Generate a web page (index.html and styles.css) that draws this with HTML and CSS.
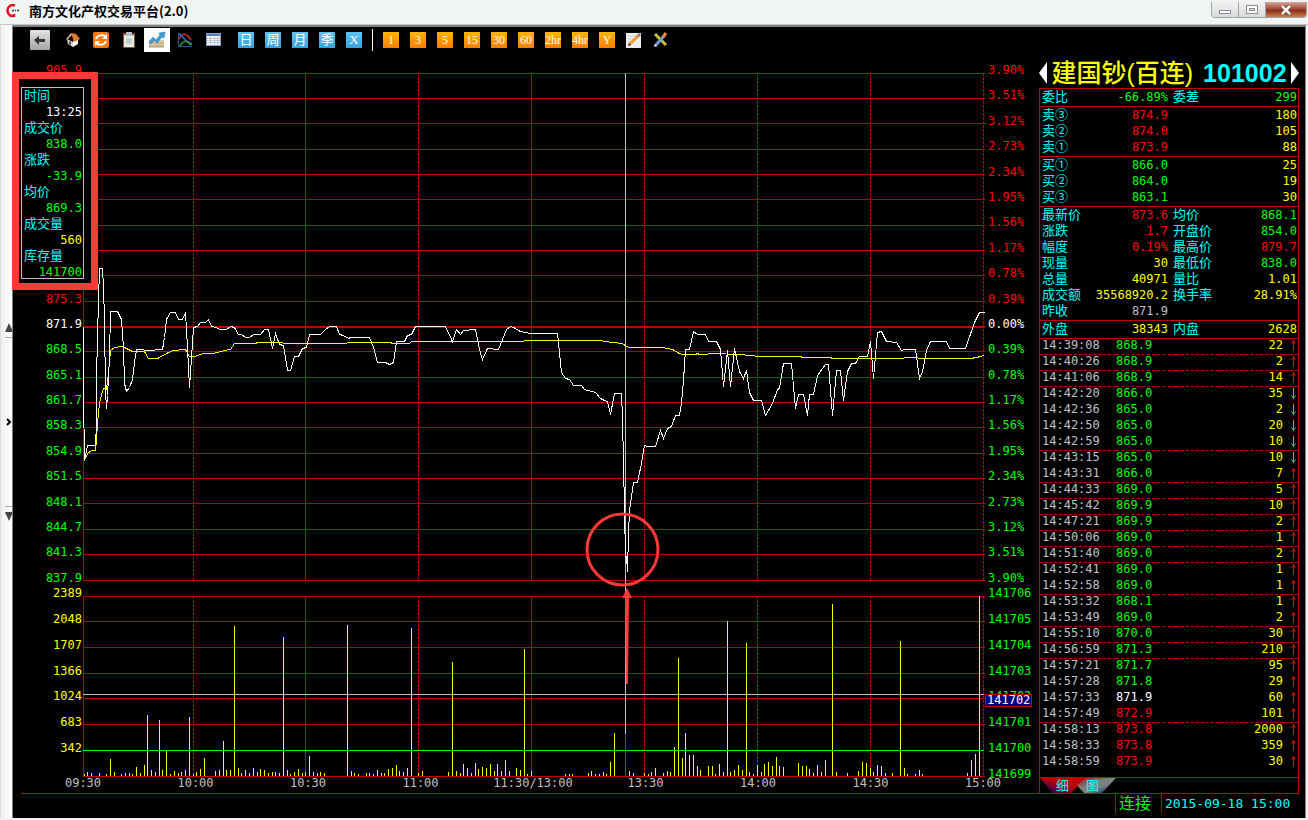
FILE: index.html
```html
<!DOCTYPE html>
<html lang="zh-CN">
<head>
    <meta charset="UTF-8">
    <meta name="viewport" content="width=device-width, initial-scale=1.0">
    <title>南方文化产权交易平台(2.0)</title>
    <link rel="stylesheet" href="styles.css">
</head>
<body>
    <header class="titlebar">
        <svg class="logo" width="13" height="14" viewBox="0 0 13 14">
            <path d="M9 1.5C5 0 1 3 1.500 7s4 6 7 4.500M8 10v3" fill="none" stroke="#e01020" stroke-width="2.500"/>
            <path d="M6 6.500h2M9 6.500h1M11 6.500h2" stroke="#333" stroke-width="1.500"/>
        </svg>
        <h1>南方文化产权交易平台(2.0)</h1>
        <div class="win-buttons">
            <button class="win-min" aria-label="最小化"><svg width="12" height="10" viewBox="0 0 12 10"><rect x="0.500" y="5.500" width="11" height="3" fill="#fff" stroke="#8a8d92"/></svg></button>
            <button class="win-max" aria-label="最大化"><svg width="12" height="10" viewBox="0 0 12 10"><rect x="0.500" y="0.500" width="11" height="8" fill="#fff" stroke="#8a8d92"/><rect x="3.500" y="3.500" width="5" height="2" fill="#ddd" stroke="#8a8d92"/></svg></button>
            <button class="win-close" aria-label="关闭"><svg width="12" height="10" viewBox="0 0 12 10"><path d="M2 1l8 8M10 1l-8 8" stroke="#5a3030" stroke-width="4"/><path d="M2 1l8 8M10 1l-8 8" stroke="#fff" stroke-width="2.500"/></svg></button>
        </div>
    </header>

    <div class="frame">
        <aside class="gutter">
            <button class="gutter-up" aria-label="上"><svg width="8" height="10" viewBox="0 0 8 10"><path d="M4 0l4 9H0z" fill="#444"/></svg></button>
            <button class="gutter-open" aria-label="展开"><svg width="6" height="8" viewBox="0 0 6 8"><path d="M1 1l3 3-3 3" fill="none" stroke="#000" stroke-width="2"/></svg></button>
            <button class="gutter-down" aria-label="下"><svg width="8" height="10" viewBox="0 0 8 10"><path d="M4 10L0 1h8z" fill="#444"/></svg></button>
        </aside>

        <main class="client">
            <div class="workspace">
                <section class="left">
                    <nav class="toolbar">
                        <button class="tool tool-back" aria-label="返回"><svg width="20" height="20" viewBox="0 0 20 20"><defs><linearGradient id="gBack" x2="0" y2="1"><stop offset="0" stop-color="#e4e4e4"/><stop offset="1" stop-color="#a4a4a4"/></linearGradient></defs><rect width="20" height="20" rx="1" fill="url(#gBack)"/><path d="M4 10l5-4v3h6v3H9v3z" fill="#333"/></svg></button>
                        <button class="tool" aria-label="主页"><svg width="16" height="16" viewBox="0 0 16 16"><path d="M2 7l6 3v5l-5-3z" fill="#d8d8d8"/><path d="M8 9l5-3v6l-5 3z" fill="#f6f6f6"/><path d="M6 1l5 1 4 5-6 3z" fill="#e77a2c"/><path d="M6 1L1 7l1 1 5-5z" fill="#b9b2aa"/><path d="M4 9l2 1v3l-2-1z" fill="#6b4a3c"/></svg></button>
                        <button class="tool" aria-label="刷新"><svg width="16" height="16" viewBox="0 0 16 16"><rect width="16" height="16" rx="2" fill="#ff7a10"/><path d="M3 7c1-4 7-5 10-2M13 9c-1 4-7 5-10 2" fill="none" stroke="#fff" stroke-width="2"/><path d="M14 2v5H9zM2 14V9h5z" fill="#fff"/></svg></button>
                        <button class="tool" aria-label="剪贴板"><svg width="14" height="16" viewBox="0 0 14 16"><rect x="1" y="1" width="12" height="15" fill="#8a4b22"/><rect x="2" y="3" width="10" height="12" fill="#e4efec"/><rect x="4" y="0" width="6" height="4" fill="#b8bec2"/><path d="M4 7h6M4 9h6M4 11h6" stroke="#9ab4b0"/></svg></button>
                        <button class="tool tool-active" aria-label="分时"><svg width="18" height="18" viewBox="0 0 18 18"><path d="M1 9h15v8H1z" fill="#dcc9a8"/><path d="M1 12h15M1 15h15" stroke="#b49b72"/><path d="M1 11l4-5 3 3 4-5-1-2 6-1-1 6-2-1-5 6-3-3-3 4z" fill="#3f9ad8" stroke="#2770a8" stroke-width="0.500"/></svg></button>
                        <button class="tool" aria-label="指标"><svg width="16" height="16" viewBox="0 0 16 16"><path d="M1.500 1v13.500H15" fill="none" stroke="#27608e"/><path d="M2 7c3-6 7-7 12 1" fill="none" stroke="#e02828" stroke-width="1.500"/><path d="M2 2c3 1 5 5 7 7 2 1 4 2 6 3" fill="none" stroke="#2b6fd0" stroke-width="1.500"/><path d="M3 14c3-6 7-6 11-1" fill="none" stroke="#30a840" stroke-width="1.500"/></svg></button>
                        <button class="tool" aria-label="列表"><svg width="15" height="14" viewBox="0 0 15 14"><rect x="0.500" y="0.500" width="14" height="12" fill="#f4f7fb" stroke="#8aa0c8"/><rect x="1" y="1" width="13" height="2" fill="#5a80c4"/><path d="M1 5.500h13M1 7.500h13M1 9.500h13M4.500 4v8M8.500 4v8M11.500 4v8" stroke="#b4bdcc" stroke-width="0.800"/></svg></button>
                        <div class="periods">
                            <button class="day">日</button>
                            <button class="day">周</button>
                            <button class="day">月</button>
                            <button class="day">季</button>
                            <button class="day">X</button>
                            <span class="sep"></span>
                            <button class="min">1</button>
                            <button class="min">3</button>
                            <button class="min">5</button>
                            <button class="min">15</button>
                            <button class="min">30</button>
                            <button class="min">60</button>
                            <button class="min">2hr</button>
                            <button class="min">4hr</button>
                            <button class="min">Y</button>
                            <button class="pic" aria-label="编辑"><svg width="16" height="16" viewBox="0 0 16 16"><rect y="1" width="15" height="15" fill="#ececec"/><path d="M2 4h9M2 7h7M2 10h6" stroke="#d0d0d0"/><path d="M3 13L13 3" stroke="#e8a030" stroke-width="3"/><path d="M12 4l2-2" stroke="#a070b0" stroke-width="3"/><path d="M2 14l1-3 2 2z" fill="#333"/></svg></button>
                            <button class="pic" aria-label="工具"><svg width="15" height="16" viewBox="0 0 15 16"><path d="M2 2l11 11" stroke="#c8c030" stroke-width="3"/><path d="M2 14L11 4" stroke="#6f9fd8" stroke-width="3"/><path d="M10 5l3-4" stroke="#f09030" stroke-width="3"/><path d="M1 15l1-3 2 2z" fill="#ddd"/></svg></button>
                        </div>
                    </nav>

                    <div class="chart">
                        <div class="axis axis-left">
                            <ul class="scale price-scale" id="priceScale"></ul>
                            <ul class="scale volume-scale" id="volumeScale"></ul>
                        </div>
                        <svg class="plot" id="plot" viewBox="83 73 902 704" preserveAspectRatio="none"></svg>
                        <div class="axis axis-right">
                            <ul class="scale price-scale" id="percentScale"></ul>
                            <ul class="scale volume-scale" id="stockScale"></ul>
                        </div>

                        <div class="marker">
                            <dl class="info">
                                <dt>时间</dt><dd class="white">13:25</dd>
                                <dt>成交价</dt><dd class="green">838.0</dd>
                                <dt>涨跌</dt><dd class="green">-33.9</dd>
                                <dt>均价</dt><dd class="green">869.3</dd>
                                <dt>成交量</dt><dd class="yellow">560</dd>
                                <dt>库存量</dt><dd class="green">141700</dd>
                            </dl>
                        </div>
                    </div>
                    <div class="times">
                        <span>09:30</span><span>10:00</span><span>10:30</span><span>11:00</span><span>11:30/13:00</span><span>13:30</span><span>14:00</span><span>14:30</span><span>15:00</span>
                    </div>
                </section>

                <section class="panel">
                    <div class="stock">
                        <button aria-label="上一个"><svg width="8" height="22" viewBox="0 0 8 22"><path d="M8 0v22L0 11z" fill="#fff"/></svg></button>
                        <h2><span class="yellow">建国钞(百连)</span> <span class="cyan">101002</span></h2>
                        <button aria-label="下一个"><svg width="8" height="22" viewBox="0 0 8 22"><path d="M0 0v22l8-11z" fill="#fff"/></svg></button>
                    </div>
                    <div class="quotes">
                        <table class="quote">
                            <tr><th>委比</th><td class="green">-66.89%</td><th>委差</th><td class="green">299</td></tr>
                        </table>
                        <table class="quote">
                            <tr><th>卖③</th><td class="red">874.9</td><th></th><td class="yellow">180</td></tr>
                            <tr><th>卖②</th><td class="red">874.0</td><th></th><td class="yellow">105</td></tr>
                            <tr><th>卖①</th><td class="red">873.9</td><th></th><td class="yellow">88</td></tr>
                        </table>
                        <table class="quote">
                            <tr><th>买①</th><td class="green">866.0</td><th></th><td class="yellow">25</td></tr>
                            <tr><th>买②</th><td class="green">864.0</td><th></th><td class="yellow">19</td></tr>
                            <tr><th>买③</th><td class="green">863.1</td><th></th><td class="yellow">30</td></tr>
                        </table>
                        <table class="quote">
                            <tr><th>最新价</th><td class="red">873.6</td><th>均价</th><td class="green">868.1</td></tr>
                            <tr><th>涨跌</th><td class="red">1.7</td><th>开盘价</th><td class="green">854.0</td></tr>
                            <tr><th>幅度</th><td class="red">0.19%</td><th>最高价</th><td class="red">879.7</td></tr>
                            <tr><th>现量</th><td class="yellow">30</td><th>最低价</th><td class="green">838.0</td></tr>
                            <tr><th>总量</th><td class="yellow">40971</td><th>量比</th><td class="yellow">1.01</td></tr>
                            <tr><th>成交额</th><td class="yellow">35568920.2</td><th>换手率</th><td class="yellow">28.91%</td></tr>
                            <tr><th>昨收</th><td class="grey">871.9</td><th></th><td></td></tr>
                        </table>
                        <table class="quote last">
                            <tr><th>外盘</th><td class="yellow">38343</td><th>内盘</th><td class="yellow">2628</td></tr>
                        </table>
                        <table class="trades"><tbody id="trades"></tbody></table>
                        <div class="tabs">
                            <button class="tab tab-detail">细</button>
                            <button class="tab tab-chart">图</button>
                        </div>
                    </div>
                </section>
            </div>

            <footer class="status">
                <span class="link green">连接</span>
                <time class="cyan">2015-09-18 15:00</time>
            </footer>
        </main>
    </div>
    <script src="chart.js"></script>
</body>
</html>
```
FILE: styles.css
```css
* {
    box-sizing: border-box;
}
body {
    display: flex;
    flex-direction: column;
    min-height: 100vh;
    margin: 0;
    background: #f0f4f5;
    color: #c0c0c0;
    font-family: "DejaVu Sans Mono", "Noto Sans CJK SC", monospace;
    font-size: 12px;
    line-height: 16px;
}
button {
    padding: 0;
    border: 0;
    background: none;
    color: inherit;
    font: inherit;
    cursor: pointer;
}
svg {
    display: block;
}
ul, dl, dd, h1, h2 {
    margin: 0;
    padding: 0;
    list-style: none;
}
.red { color: #ff0000; }
.green { color: #00ff00; }
.yellow { color: #ffff00; }
.cyan { color: #00ffff; }
.white { color: #ffffff; }
.grey { color: #c0c0c0; }

/* title bar */
.titlebar {
    display: flex;
    align-items: flex-start;
    height: 24px;
    padding: 2px 1px 0 6px;
}
.logo {
    margin-top: 2px;
}
.titlebar h1 {
    flex: 1;
    padding-left: 10px;
    color: #000;
    font: bold 13px/17px "Noto Sans CJK SC", sans-serif;
}
.win-buttons {
    display: flex;
    height: 16px;
    border: 1px solid #a0a4a8;
    border-top: 0;
    border-radius: 0 0 4px 4px;
    overflow: hidden;
}
.win-buttons button {
    display: flex;
    align-items: center;
    justify-content: center;
    width: 27px;
    border-right: 1px solid #a0a4a8;
    background: linear-gradient(#f2f2f2, #d8dadc);
}
.win-buttons .win-close {
    width: 40px;
    border: 0;
    background: linear-gradient(#d8a898, #984030 50%, #8a2c18 55%, #c88050);
}

/* window frame */
.frame {
    display: flex;
    flex: 1;
    padding: 0 2px 2px 0;
    border-top: 1px solid #c8c8c8;
}
.gutter {
    display: flex;
    flex-direction: column;
    align-items: center;
    justify-content: center;
    gap: 80px;
    width: 12px;
    padding-left: 4px;
    border-left: 1px solid #dcdcdc;
    background: linear-gradient(to right, #f0f0f0, #ffffff);
}
.gutter-up {
    padding-bottom: 4px;
    border-bottom: 1px solid #aaa;
}
.gutter-down {
    padding-top: 4px;
    border-top: 1px solid #aaa;
}
.client {
    display: flex;
    flex: 1;
    flex-direction: column;
    min-width: 0;
    border: solid #808080;
    border-width: 2px 1px 0 1px;
    background: #000;
}
.workspace {
    display: flex;
    flex: 1;
}
.left {
    display: flex;
    flex: 1;
    flex-direction: column;
    min-width: 0;
}

/* toolbar */
.toolbar {
    display: flex;
    gap: 2px;
    height: 27px;
    padding: 1px 0 2px 14px;
}
.tool {
    display: flex;
    align-items: center;
    justify-content: center;
    width: 26px;
    height: 24px;
}
.tool-back {
    margin-right: 5px;
}
.tool-active {
    background: #fff;
}
.periods {
    display: flex;
    align-items: center;
    gap: 11px;
    padding-left: 10px;
}
.day, .min, .pic {
    width: 16px;
    height: 16px;
}
.day, .min {
    display: flex;
    align-items: center;
    justify-content: center;
    color: #fff;
}
.day {
    background: linear-gradient(#5cc4f4, #38a0dc);
    font: 13px/16px "Liberation Serif", "Noto Sans CJK SC", serif;
}
.min {
    background: linear-gradient(#ffb400, #ff7c00);
    font: 12px/16px "Liberation Serif", serif;
}
.sep {
    width: 1px;
    height: 22px;
    margin: 0 -1px;
    background: #fff;
}

/* chart */
.chart {
    position: relative;
    display: flex;
    flex: 1;
    padding-top: 19px;
}
.plot {
    flex: 1;
    min-width: 0;
    height: auto;
    align-self: stretch;
    shape-rendering: crispEdges;
}
.axis {
    display: flex;
    flex-direction: column;
    gap: 15px;
    min-height: 704px;
}
.axis-left {
    width: 70px;
    text-align: right;
}
.axis-right {
    width: 54px;
    padding-left: 3px;
}
.scale {
    display: flex;
    flex-direction: column;
    justify-content: space-between;
    margin: -11px 1px -5px 0;
}
.price-scale {
    flex: 524;
}
.volume-scale {
    flex: 197;
}
.scale li {
    height: 16px;
}
.scale .current {
    position: relative;
}
.current b {
    position: absolute;
    top: 6px;
    left: -3px;
    padding: 0 1px;
    border: 1px solid #c00000;
    background: #000080;
    color: #fff;
    font-weight: normal;
    line-height: 11px;
}
.times {
    display: flex;
    justify-content: space-between;
    height: 16px;
    padding: 0 56px 0 70px;
    line-height: 13px;
}
.times span {
    display: flex;
    justify-content: center;
    width: 0;
}
.grid {
    fill: none;
    stroke: #c00000;
}
.dashed {
    stroke-dasharray: 3 1;
}
.base {
    stroke-width: 2;
}
.level {
    stroke: #00ff00;
}
.price {
    fill: none;
    stroke: #ffffff;
}
.average {
    fill: none;
    stroke: #ffff00;
}
.bars {
    fill: none;
    stroke: #ffff00;
}
.cross {
    stroke: #c0c0c0;
}
.cross-bar {
    stroke: #4040c0;
}
.note {
    fill: none;
    stroke: #ff3838;
    stroke-width: 3;
    shape-rendering: auto;
}
.note-arrow {
    fill: #ff3838;
    shape-rendering: auto;
}

/* framed readout at the cursor, lies over the price scale */
.marker {
    position: absolute;
    top: 18px;
    left: -1px;
    width: 86px;
    padding: 8px 7px 4px 2px;
    border: 7px solid #ff3838;
    background: #000;
}
.info {
    width: 63px;
    height: 192px;
    padding: 0 1px 0 2px;
    border: 1px solid #c0c0c0;
    color: #00ffff;
}
.info dt {
    font-size: 13px;
}
.info dd {
    text-align: right;
}

/* right panel */
.panel {
    display: flex;
    flex-direction: column;
    width: 260px;
    margin-right: 6px;
}
.stock {
    display: flex;
    align-items: center;
    justify-content: space-between;
    height: 61px;
    padding-top: 30px;
}
.stock h2 {
    display: flex;
    gap: 10px;
    font: bold 25px/30px "Liberation Sans", "Noto Sans CJK SC", sans-serif;
    white-space: nowrap;
}
.stock .yellow {
    font-weight: 500;
}
.quotes {
    display: flex;
    flex: 1;
    flex-direction: column;
    border: solid #c00000;
    border-width: 0 1px;
}
table {
    width: 100%;
    border-spacing: 0;
    table-layout: fixed;
}
th, td {
    height: 16px;
    padding: 0;
    text-align: right;
    white-space: nowrap;
}
.quote {
    padding-bottom: 1px;
    border-top: 1px solid #c00000;
}
.quote th {
    width: 44px;
    padding-left: 2px;
    color: #00ffff;
    font-size: 13px;
    font-weight: normal;
    text-align: left;
}
.quote td:nth-child(2) {
    width: 84px;
}
.quote th:nth-child(3) {
    width: 50px;
    padding-left: 5px;
}
.quote td:last-child {
    padding-right: 1px;
}
.trades td {
    padding-bottom: 2px;
    border-top: 1px solid transparent;
    line-height: 13px;
}
.trades .minute td {
    border-top: 1px dashed #c00000;
}
.trades tr:first-child td {
    border-top: 1px solid #c00000;
}
.trades td:nth-child(1) {
    width: 76px;
    padding-left: 2px;
    text-align: left;
}
.trades td:nth-child(2) {
    width: 60px;
    text-align: left;
}
.trades td:nth-child(4) {
    width: 15px;
}
.trades svg {
    margin-left: 8px;
}
.tabs {
    display: flex;
    height: 16px;
    margin-top: auto;
    border-top: 1px solid #c00000;
}
.tab {
    height: 15px;
    color: #00ffff;
    font-size: 13px;
    line-height: 15px;
}
.tab-detail {
    width: 45px;
    background: linear-gradient(200deg, #c00000 45%, #000080);
    clip-path: polygon(0 0, 100% 0, 31px 100%, 13px 100%);
}
.tab-chart {
    width: 39px;
    margin-left: -8px;
    padding-right: 8px;
    background: linear-gradient(160deg, #c00000, #808080 40%, #808080 60%, #000080);
    clip-path: polygon(8px 0, 100% 0, 25px 100%, 7px 100%, 0 50%);
}

/* status bar */
.status {
    display: flex;
    justify-content: flex-end;
    height: 25px;
    margin: 0 6px 0 8px;
    border-top: 1px solid #c00000;
}
.status .link {
    height: 19px;
    padding: 0 10px 0 3px;
    border-left: 1px solid #c00000;
    font-size: 16px;
    line-height: 19px;
}
.status time {
    width: 138px;
    height: 19px;
    padding-left: 3px;
    border-left: 1px solid #c00000;
    font-size: 13px;
    line-height: 19px;
    white-space: nowrap;
}
```
FILE: chart.js
```js
var SVG_NS = 'http://www.w3.org/2000/svg';
var plot = document.getElementById('plot');

function draw(tag, cls, attrs) {
    var el = document.createElementNS(SVG_NS, tag);
    el.setAttribute('class', cls);
    for (var key in attrs) {
        el.setAttribute(key, attrs[key]);
    }
    plot.appendChild(el);
}

function line(cls, x1, y1, x2, y2) {
    draw('line', cls, { x1: x1, y1: y1, x2: x2, y2: y2 });
}

// horizontal grid
for (var i = 0; i <= 20; i++) {
    var y = Math.floor(73 + i * 25.35) + 0.5;
    if (i === 10) {
        line('grid base', 83, 327, 985, 327);
    } else {
        line('grid', 83, y, 985, y);
    }
}
[596, 621, 647, 673, 698, 724, 776].forEach(function (y) {
    line('grid', 83, y + 0.5, 985, y + 0.5);
});

// vertical grid, solid every second half hour in the morning
[[83, ''], [193, 'dashed'], [305, ''], [418, 'dashed'], [531, ''], [644, 'dashed'],
 [757, 'dashed'], [870, 'dashed'], [983, 'dashed']].forEach(function (v) {
    line('grid ' + v[1], v[0] + 0.5, 73, v[0] + 0.5, 580);
    line('grid ' + v[1], v[0] + 0.5, 596, v[0] + 0.5, 776);
});

// volume: x, height
var bars = [84,2,87,4,91,3,99,3,106,2,110,17,114,4,121,2,125,3,129,3,132,2,136,9,140,3,144,11,147,61,
    151,6,155,4,159,56,162,6,166,25,170,2,174,5,178,3,181,4,185,6,189,59,193,2,196,4,200,7,204,18,
    215,5,219,6,223,35,226,6,230,6,234,150,238,8,241,3,245,6,249,3,253,8,257,4,260,7,264,6,268,3,
    272,4,275,4,279,3,283,139,287,6,290,2,294,4,298,7,302,3,305,4,309,20,313,4,317,3,320,4,324,3,
    347,151,351,5,354,3,358,2,366,3,369,3,373,2,377,6,381,3,384,3,388,7,392,8,396,11,399,5,403,4,
    407,8,411,148,418,3,422,5,448,4,452,114,456,5,460,3,463,12,467,8,471,3,475,13,478,7,482,9,
    486,8,490,12,494,5,497,12,501,5,505,16,509,5,516,8,520,6,524,127,527,2,531,5,565,2,569,2,
    572,2,588,3,591,5,595,2,599,2,603,4,606,2,610,14,614,43,629,5,633,3,644,3,648,2,651,4,655,8,
    663,3,667,5,670,4,674,29,678,118,682,18,685,43,689,21,693,21,697,10,700,6,708,10,712,10,
    715,2,719,12,723,4,727,155,730,4,734,6,738,11,742,6,746,133,749,4,753,2,757,11,761,4,764,12,
    768,14,772,10,776,19,779,10,783,9,798,13,802,10,806,10,809,7,813,3,817,11,821,4,825,16,
    832,172,836,4,847,3,858,5,862,14,866,13,870,8,873,4,877,11,881,10,885,3,892,3,900,135,904,8,
    907,2,915,2,919,6,922,2,967,3,971,16,975,22,979,180];
var d = '';
for (var b = 0; b < bars.length; b += 2) {
    d += 'M' + (bars[b] + 0.5) + ' 776v-' + bars[b + 1];
}
draw('path', 'bars', { d: d });
line('level', 83, 750.5, 984, 750.5);

// crosshair
line('cross', 625.5, 73, 625.5, 734);
line('cross', 83, 694.5, 984, 694.5);
line('cross-bar', 625.5, 734, 625.5, 776);

var average = '84,460 87,453 91,450 95,450 96,440 97,422 99,403 101,394 103,388 106,389 108,372 110,350 ' +
    '114,347 122,346 126,348 132,351 144,351 148,358 157,358 168,352 173,350 185,349 189,356 194,356 ' +
    '203,353 213,353 224,350 230,349 234,343 255,343 257,342 282,342 283,343 346,343 347,342 390,342 ' +
    '392,343 409,343 411,341 523,341 524,340 602,340 603,341 613,342 622,343 626,346 629,347 662,347 ' +
    '672,349 679,353 682,354 695,354 697,353 699,354 707,354 708,353 743,354 746,355 762,356 800,356 ' +
    '802,357 830,357 832,358 903,358 904,357 917,357 918,358 969,358 977,357 979,356 984,355';

var price = '83,326 83,393 84,460 87,445 95,445 96,423 96,378 97,337 98,300 99,268 102,268 103,286 104,320 ' +
    '105,390 106,408 107,395 109,357 110,311 117,311 121,319 123,347 124,383 126,391 129,387 132,379 ' +
    '134,362 136,349 143,349 144,350 154,350 155,349 162,349 164,337 166,319 170,312 175,312 178,319 ' +
    '182,319 185,312 187,347 189,387 191,357 193,327 197,326 200,322 205,322 208,319 211,326 216,327 ' +
    '219,329 226,329 230,326 234,327 238,334 241,334 245,337 249,337 253,334 260,334 264,329 268,329 ' +
    '272,348 275,333 279,344 283,345 285,357 287,370 290,370 294,356 298,356 302,348 306,347 309,334 ' +
    '320,334 325,329 329,326 336,326 339,334 343,335 348,338 350,337 369,337 373,347 377,362 385,362 ' +
    '389,364 393,362 396,341 404,341 407,335 411,334 415,326 445,326 452,341 456,329 460,334 463,330 ' +
    '475,329 479,349 482,359 487,348 498,349 502,339 506,329 510,326 513,327 520,331 530,333 557,333 ' +
    '559,352 561,372 565,378 569,379 573,385 581,385 584,389 595,392 600,398 604,400 607,401 610,414 ' +
    '614,393 621,393 622,417 623,463 624,510 625,556 626,556 627,571 628,533 629,510 633,482 637,482 ' +
    '641,463 644,445 647,446 655,446 660,430 663,438 667,428 671,426 675,415 679,415 681,402 683,380 ' +
    '685,349 689,349 693,331 697,334 705,334 708,341 716,341 720,349 723,386 727,350 730,386 734,348 ' +
    '739,371 743,378 746,370 749,392 753,400 761,400 765,415 772,403 777,389 779,388 783,363 791,363 ' +
    '795,408 798,394 803,394 807,415 809,394 813,394 817,375 825,364 828,364 832,415 836,370 840,370 ' +
    '843,400 847,371 851,363 855,363 859,356 867,356 870,341 873,378 877,332 881,331 886,341 896,342 ' +
    '901,350 904,349 915,349 919,378 922,371 926,350 930,341 946,341 949,348 965,348 974,322 979,312 984,312';

draw('polyline', 'average', { points: average, transform: 'translate(0.5 0.5)' });
draw('polyline', 'price', { points: price, transform: 'translate(0.5 0.5)' });

// low point mark
draw('circle', 'note', { cx: 622.5, cy: 549.5, r: 35.5 });
draw('path', 'note-arrow', { d: 'M627 588l5 10h-3l-1 86h-2l-1-86h-3z' });

// scales
function scale(id, labels, color) {
    document.getElementById(id).innerHTML = labels.map(function (text, n) {
        return '<li class="' + color(n) + '">' + text + '</li>';
    }).join('');
}
function byLevel(n) {
    return n < 10 ? 'red' : n === 10 ? 'white' : 'green';
}
scale('priceScale', ['905.9', '', '', '', '', '', '', '', '', '875.3', '871.9', '868.5', '865.1', '861.7',
    '858.3', '854.9', '851.5', '848.1', '844.7', '841.3', '837.9'], byLevel);
scale('percentScale', ['3.90%', '3.51%', '3.12%', '2.73%', '2.34%', '1.95%', '1.56%', '1.17%', '0.78%', '0.39%',
    '0.00%', '0.39%', '0.78%', '1.17%', '1.56%', '1.95%', '2.34%', '2.73%', '3.12%', '3.51%', '3.90%'], byLevel);
scale('volumeScale', ['2389', '2048', '1707', '1366', '1024', '683', '342', ''], function () { return 'yellow'; });
scale('stockScale', ['141706', '141705', '141704', '141703', '141702<b>141702</b>', '141701', '141700', '141699'],
    function (n) { return n === 4 ? 'green current' : 'green'; });

// trades: time, price, volume, direction
var trades = [
    ['14:39:08', '868.9', 22, 1], ['14:40:26', '868.9', 2, 1], ['14:41:06', '868.9', 14, 1],
    ['14:42:20', '866.0', 35, 0], ['14:42:36', '865.0', 2, 0], ['14:42:50', '865.0', 20, 0],
    ['14:42:59', '865.0', 10, 0], ['14:43:15', '865.0', 10, 0], ['14:43:31', '866.0', 7, 1],
    ['14:44:33', '869.0', 5, 1], ['14:45:42', '869.9', 10, 1], ['14:47:21', '869.9', 2, 1],
    ['14:50:06', '869.0', 1, 1], ['14:51:40', '869.0', 2, 1], ['14:52:41', '869.0', 1, 1],
    ['14:52:58', '869.0', 1, 1], ['14:53:32', '868.1', 1, 1], ['14:53:49', '869.0', 2, 1],
    ['14:55:10', '870.0', 30, 1], ['14:56:59', '871.3', 210, 1], ['14:57:21', '871.7', 95, 1],
    ['14:57:28', '871.8', 29, 1], ['14:57:33', '871.9', 60, 1], ['14:57:49', '872.9', 101, 1],
    ['14:58:13', '873.8', 2000, 1], ['14:58:33', '873.8', 359, 1], ['14:58:59', '873.9', 30, 1]
];
var up = '<svg width="5" height="11" viewBox="0 0 5 11"><path d="M2.500 0v11M0.500 3.500L2.500 1l2 2.500" fill="none" stroke="#ff0000"/></svg>';
var down = '<svg width="5" height="11" viewBox="0 0 5 11"><path d="M2.500 0v11M0.500 7.500l2 2.500 2-2.500" fill="none" stroke="#00ff00"/></svg>';

document.getElementById('trades').innerHTML = trades.map(function (t, n) {
    var newMinute = n > 0 && trades[n - 1][0].slice(0, 5) !== t[0].slice(0, 5);
    var color = t[1] > '871.9' ? 'red' : t[1] === '871.9' ? 'white' : 'green';
    return '<tr' + (newMinute ? ' class="minute"' : '') + '><td>' + t[0] + '</td><td class="' + color + '">' + t[1] +
        '</td><td class="yellow">' + t[2] + '</td><td>' + (t[3] ? up : down) + '</td></tr>';
}).join('');
```
